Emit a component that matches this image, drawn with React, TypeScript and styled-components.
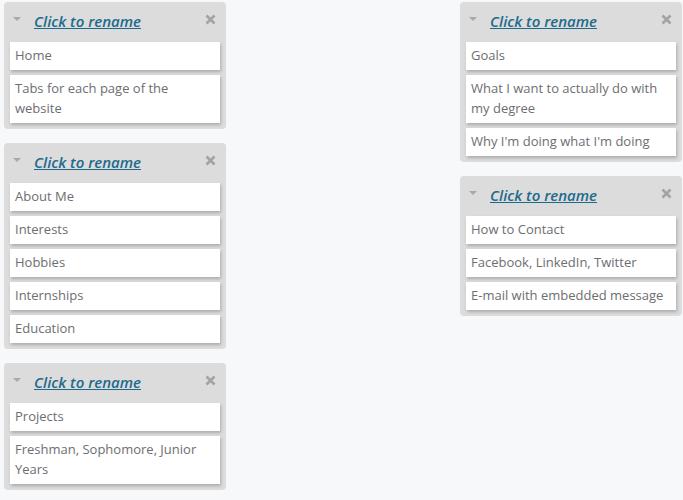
import React from "react";
import styled, { createGlobalStyle } from "styled-components";

const Global = createGlobalStyle`
  html, body { margin: 0; padding: 0; background: #f7f8fa; }
  body { font-family: "Open Sans", "Liberation Sans", sans-serif; }
`;

const Board = styled.div`
  display: grid;
  grid-template-columns: repeat(3, 228px);
  padding: 2px 0 0 4px;
  align-items: start;
`;

const Column = styled.div`
  display: flex;
  flex-direction: column;
  gap: 14px;
`;

const Panel = styled.div`
  width: 222px;
  box-sizing: border-box;
  background: #dcdcdc;
  border-radius: 4px;
  padding: 0 6px 6px 6px;
`;

const Header = styled.div`
  height: 40px;
  box-sizing: border-box;
  padding-bottom: 3px;
  display: flex;
  align-items: center;
`;

const Caret = styled.span`
  width: 0;
  height: 0;
  border-left: 4px solid transparent;
  border-right: 4px solid transparent;
  border-top: 4px solid #a9a9a9;
  margin: -3px 0 0 3px;
`;

const Title = styled.a`
  margin-left: 13px;
  font-size: 15px;
  font-weight: 600;
  font-style: italic;
  color: #1d6a8c;
  text-decoration: underline;
  cursor: pointer;
`;

const Close = styled.span`
  margin-left: auto;
  margin-right: 4px;
  margin-top: -3px;
  display: flex;
`;

const Cards = styled.div`
  display: flex;
  flex-direction: column;
  gap: 5px;
`;

const Card = styled.div`
  background: #ffffff;
  padding: 3px 5px 5px;
  font-size: 13px;
  line-height: 20px;
  color: #6d6e71;
  box-shadow: 1px 2px 3px rgba(0, 0, 0, 0.22);
`;

const XIcon = () => (
  <svg width="11" height="11" viewBox="0 0 11 11">
    <path d="M1.5 1.5 L9.5 9.5 M9.5 1.5 L1.5 9.5" stroke="#a3a3a3" strokeWidth="2.6" strokeLinecap="butt" />
  </svg>
);

const List = ({ items }: { items: string[] }) => (
  <Panel>
    <Header>
      <Caret />
      <Title>Click to rename</Title>
      <Close><XIcon /></Close>
    </Header>
    <Cards>
      {items.map((t) => (
        <Card key={t}>{t}</Card>
      ))}
    </Cards>
  </Panel>
);

export default function App() {
  return (
    <>
      <Global />
      <Board>
        <Column>
          <List items={["Home", "Tabs for each page of the website"]} />
          <List items={["About Me", "Interests", "Hobbies", "Internships", "Education"]} />
          <List items={["Projects", "Freshman, Sophomore, Junior Years"]} />
        </Column>
        <Column />
        <Column>
          <List items={["Goals", "What I want to actually do with my degree", "Why I'm doing what I'm doing"]} />
          <List items={["How to Contact", "Facebook, LinkedIn, Twitter", "E-mail with embedded message"]} />
        </Column>
      </Board>
    </>
  );
}
